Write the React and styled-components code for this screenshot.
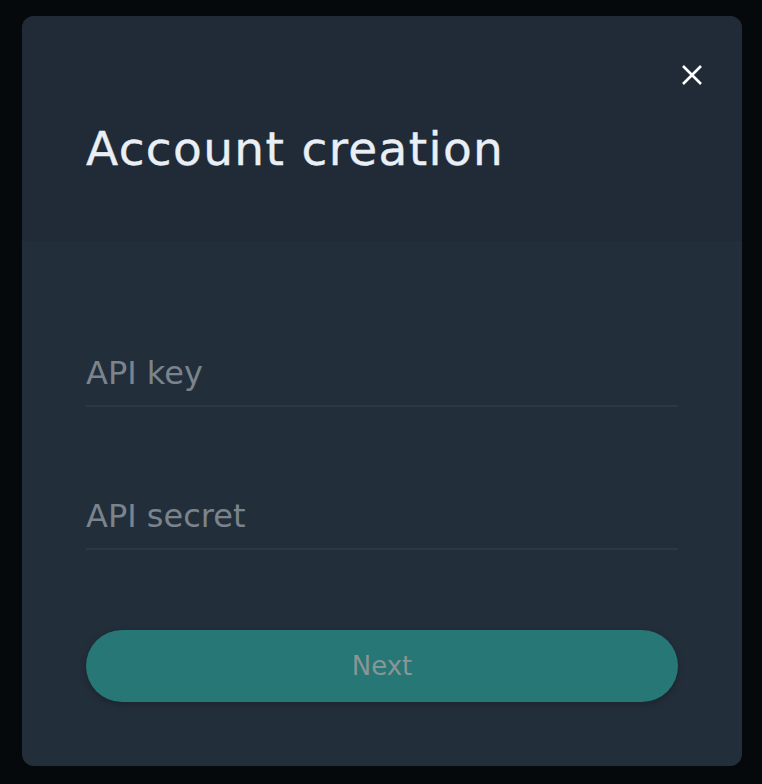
import React from "react";
import styled, { createGlobalStyle } from "styled-components";

const GlobalStyle = createGlobalStyle`
  html, body {
    margin: 0;
    padding: 0;
    background: #05090c;
  }
  body {
    font-family: "DejaVu Sans", "Liberation Sans", sans-serif;
  }
  * { box-sizing: border-box; }
`;

const Page = styled.div`
  min-height: 784px;
  padding: 16px 20px 18px 22px;
  background: #05090c;
`;

const Modal = styled.div`
  width: 720px;
  border-radius: 12px;
  overflow: hidden;
  background: #232e3b;
  display: flex;
  flex-direction: column;
`;

const Header = styled.header`
  height: 225px;
  background: #202b37;
  padding: 47px 38px 0 64px;
  display: flex;
  flex-direction: column;
`;

const CloseRow = styled.div`
  display: flex;
  justify-content: flex-end;
`;

const CloseButton = styled.button`
  width: 24px;
  height: 24px;
  padding: 0;
  border: 0;
  background: transparent;
  color: #ffffff;
  cursor: pointer;
  display: flex;
  align-items: center;
  justify-content: center;
`;

const Title = styled.h1`
  margin: 38px 0 0;
  font-family: "DejaVu Sans", sans-serif;
  font-weight: 400;
  font-size: 47px;
  line-height: 48px;
  letter-spacing: 1.35px;
  color: #e9eff5;
  -webkit-text-stroke: 0.4px #e9eff5;
`;

const Body = styled.div`
  padding: 112px 64px 64px;
  display: flex;
  flex-direction: column;
`;

const Field = styled.input`
  display: block;
  width: 100%;
  height: 54px;
  padding: 0 0 12px;
  margin: 0 0 ${(p) => p.$gap}px;
  border: 0;
  border-bottom: 2px solid #2c3845;
  background: transparent;
  outline: none;
  font-family: "DejaVu Sans", sans-serif;
  font-size: 32px;
  line-height: 40px;
  color: #e9eff5;

  &::placeholder {
    color: #7a848d;
    opacity: 1;
  }
`;

const NextButton = styled.button`
  width: 100%;
  height: 72px;
  border: 0;
  border-radius: 36px;
  background: #267776;
  color: #8a9595;
  font-family: "DejaVu Sans", sans-serif;
  font-size: 26px;
  box-shadow: 0 2px 6px rgba(0, 0, 0, 0.25);
  cursor: pointer;
`;

function CloseIcon() {
  return (
    <svg width="24" height="24" viewBox="0 0 24 24" fill="none">
      <path
        d="M3 3 L21 21 M21 3 L3 21"
        stroke="currentColor"
        strokeWidth="2.6"
        strokeLinecap="butt"
      />
    </svg>
  );
}

export default function App() {
  return (
    <>
      <GlobalStyle />
      <Page>
        <Modal>
          <Header>
            <CloseRow>
              <CloseButton aria-label="Close">
                <CloseIcon />
              </CloseButton>
            </CloseRow>
            <Title>Account creation</Title>
          </Header>
          <Body>
            <Field placeholder="API key" $gap={89} />
            <Field placeholder="API secret" $gap={80} />
            <NextButton>Next</NextButton>
          </Body>
        </Modal>
      </Page>
    </>
  );
}
